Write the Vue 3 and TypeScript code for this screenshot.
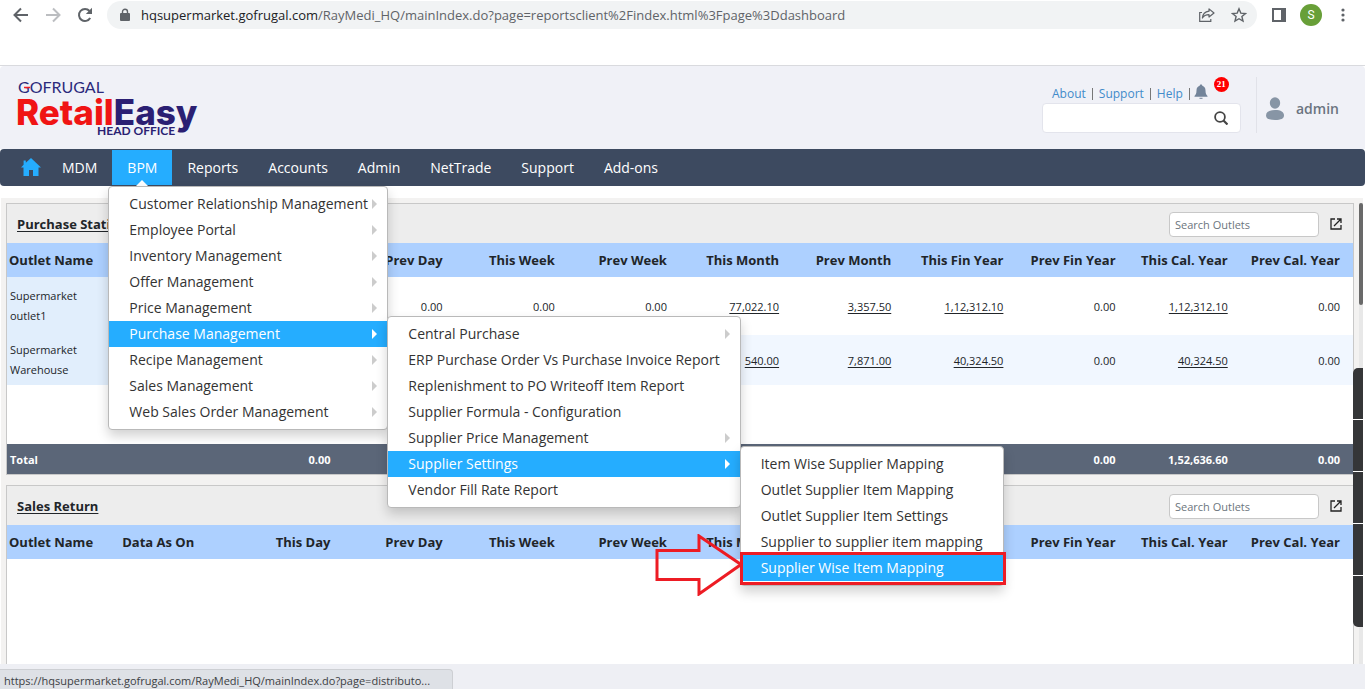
<script setup lang="ts">
interface MenuItem {
  label: string
  more?: boolean
  children?: MenuItem[]
}

interface OutletRow {
  name: string
  values: string[]
}

const supplierSettings: MenuItem[] = [
  { label: 'Item Wise Supplier Mapping' },
  { label: 'Outlet Supplier Item Mapping' },
  { label: 'Outlet Supplier Item Settings' },
  { label: 'Supplier to supplier item mapping' },
  { label: 'Supplier Wise Item Mapping' },
]

const purchaseMenu: MenuItem[] = [
  { label: 'Central Purchase', more: true },
  { label: 'ERP Purchase Order Vs Purchase Invoice Report' },
  { label: 'Replenishment to PO Writeoff Item Report' },
  { label: 'Supplier Formula - Configuration' },
  { label: 'Supplier Price Management', more: true },
  { label: 'Supplier Settings', more: true, children: supplierSettings },
  { label: 'Vendor Fill Rate Report' },
]

const bpmMenu: MenuItem[] = [
  { label: 'Customer Relationship Management', more: true },
  { label: 'Employee Portal', more: true },
  { label: 'Inventory Management', more: true },
  { label: 'Offer Management', more: true },
  { label: 'Price Management', more: true },
  { label: 'Purchase Management', more: true, children: purchaseMenu },
  { label: 'Recipe Management', more: true },
  { label: 'Sales Management', more: true },
  { label: 'Web Sales Order Management', more: true },
]

const navItems = ['MDM', 'BPM', 'Reports', 'Accounts', 'Admin', 'NetTrade', 'Support', 'Add-ons']

const columns = [
  'Outlet Name', 'Data As On', 'This Day', 'Prev Day', 'This Week', 'Prev Week',
  'This Month', 'Prev Month', 'This Fin Year', 'Prev Fin Year', 'This Cal. Year', 'Prev Cal. Year',
]

const outlets: OutletRow[] = [
  { name: 'Supermarket outlet1', values: ['', '0.00', '0.00', '0.00', '0.00', '77,022.10', '3,357.50', '1,12,312.10', '0.00', '1,12,312.10', '0.00'] },
  { name: 'Supermarket Warehouse', values: ['', '', '', '', '', '540.00', '7,871.00', '40,324.50', '0.00', '40,324.50', '0.00'] },
]

const totals = ['', '0.00', '', '', '', '', '', '1,52,636.60', '0.00', '1,52,636.60', '0.00']

const cards = [
  { id: 'purchase', title: 'Purchase Statistics', rows: outlets, totals },
  { id: 'return', title: 'Sales Return', rows: [] as OutletRow[], totals: [] as string[] },
]
</script>

<template>
  <div class="page">
    <div class="browser">
      <button class="tool back" aria-label="Back">
        <svg width="16" height="16" viewBox="0 0 16 16"><path d="M15 8H2M8 1.5 1.5 8 8 14.5" fill="none" stroke="#5f6368" stroke-width="2" /></svg>
      </button>
      <button class="tool forward" aria-label="Forward">
        <svg width="16" height="16" viewBox="0 0 16 16"><path d="M1 8h13M8 1.5 14.5 8 8 14.5" fill="none" stroke="#bcbec1" stroke-width="2" /></svg>
      </button>
      <button class="tool reload" aria-label="Reload">
        <svg width="16" height="16" viewBox="0 0 16 16"><path d="M13.2 11A6 6 0 1 1 12.5 4" fill="none" stroke="#5f6368" stroke-width="2" /><path d="M15 .8V7H8.8z" fill="#5f6368" /></svg>
      </button>
      <div class="address">
        <svg width="10" height="14" viewBox="0 0 10 14"><rect x="1" y="5" width="8" height="8" rx="1" fill="#5f6368" /><rect x="0" y="5" width="10" height="8" rx="1" fill="#5f6368" /><path d="M2.5 6V3.7a2.5 2.5 0 0 1 5 0V6" fill="none" stroke="#5f6368" stroke-width="1.4" /></svg>
        <span class="url"><span class="host">hqsupermarket.gofrugal.com</span>/RayMedi_HQ/mainIndex.do?page=reportsclient%2Findex.html%3Fpage%3Ddashboard</span>
        <button class="tool share" aria-label="Share">
          <svg width="16" height="14" viewBox="0 0 16 14"><path d="M3 4.5H.7v8.8h11.1V11" fill="none" stroke="#5f6368" stroke-width="1.2" /><path d="M10 .9 15 5l-5 4V6.700C7 6.700 4.800 7.600 3.400 10 3.700 6.500 6 3.700 10 3.200z" fill="none" stroke="#5f6368" stroke-width="1.200" stroke-linejoin="round" /></svg>
        </button>
        <button class="tool" aria-label="Bookmark">
          <svg width="16" height="16" viewBox="0 0 16 16"><path d="m8 1.800 1.800 4.300 4.700.4-3.600 3 1.100 4.600L8 11.700l-4 2.400 1.100-4.600-3.600-3 4.700-.4z" fill="none" stroke="#5f6368" stroke-width="1.400" /></svg>
        </button>
      </div>
      <button class="tool panel" aria-label="Side panel">
        <svg width="14" height="14" viewBox="0 0 14 14"><path d="M0 0h14v14H0zM2 2v10h7V2z" fill="#5f6368" fill-rule="evenodd" /></svg>
      </button>
      <button class="profile">S</button>
      <button class="tool" aria-label="More">
        <svg width="4" height="14" viewBox="0 0 4 14"><g fill="#5f6368"><circle cx="2" cy="2" r="1.600" /><circle cx="2" cy="7" r="1.600" /><circle cx="2" cy="12" r="1.600" /></g></svg>
      </button>
    </div>

    <header class="header">
      <svg class="logo" width="184" height="64" viewBox="0 0 184 64">
        <text x="0" y="16" class="logo-top">GOFRUGAL</text>
        <path d="M6 10.500h6" stroke="#ee1c25" stroke-width="1.500" />
        <text x="-2" y="48" class="logo-main"><tspan fill="#f01414">Retail</tspan><tspan fill="#2b1f73">Easy</tspan></text>
        <text x="79" y="58" class="logo-sub">HEAD OFFICE</text>
      </svg>
      <div class="tools">
        <div class="links">
          <a href="#">About</a>
          <a href="#">Support</a>
          <a href="#">Help</a>
          <button class="bell" aria-label="Notifications">
            <svg width="14" height="16" viewBox="0 0 14 16"><path d="M7 .5c.8 0 1.300.5 1.300 1.200C10.500 2.500 11.500 4 11.500 6.500c0 3 .8 4.300 2 5.500v.8H.5V12c1.200-1.200 2-2.500 2-5.500C2.500 4 3.500 2.500 5.700 1.700 5.700 1 6.200.5 7 .5z" fill="#73849a" /><path d="M5.500 14.300h3" stroke="#73849a" stroke-width="1" /></svg>
            <span class="badge">21</span>
          </button>
        </div>
        <form class="search" @submit.prevent>
          <input type="text" aria-label="Search" />
          <button aria-label="Go">
            <svg width="14" height="14" viewBox="0 0 14 14"><circle cx="6" cy="6" r="4.900" fill="none" stroke="#444" stroke-width="1.800" /><path d="m9.500 9.500 4 4" stroke="#444" stroke-width="2.200" /></svg>
          </button>
        </form>
      </div>
      <a class="user" href="#">
        <svg width="18" height="23" viewBox="0 0 18 23"><ellipse cx="9" cy="6" rx="5.200" ry="5.700" fill="#8795a5" /><path d="M0 18.500C0 15 3 13 9 13s9 2 9 5.500C18 21.500 15 23 9 23s-9-1.500-9-4.500z" fill="#8795a5" /></svg>
        admin
      </a>
    </header>

    <nav class="nav">
      <ul class="nav-list">
        <li>
          <a class="home" href="#" aria-label="Home">
            <svg width="20" height="18" viewBox="0 0 20 18"><path d="M10 0 4.800 4.700V2.500H2.600v4.200L0 9.400h2.500V18H8v-6h4v6h5.500V9.400H20z" fill="#25adff" /></svg>
          </a>
        </li>
        <li v-for="item in navItems" :key="item" class="nav-item" :class="{ open: item === 'BPM' }">
          <a href="#">{{ item }}</a>
          <ul v-if="item === 'BPM'" class="menu menu-root">
            <li v-for="first in bpmMenu" :key="first.label" :class="{ active: first.children }">
              <a href="#" :class="{ more: first.more }">{{ first.label }}</a>
              <ul v-if="first.children" class="menu menu-sub">
                <li v-for="second in first.children" :key="second.label" :class="{ active: second.children }">
                  <a href="#" :class="{ more: second.more }">{{ second.label }}</a>
                  <ul v-if="second.children" class="menu menu-sub">
                    <li v-for="(third, i) in second.children" :key="third.label" :class="{ active: i === 4 }">
                      <a href="#">{{ third.label }}</a>
                      <div v-if="i === 4" class="marker">
                        <svg class="pointer" width="88" height="62" viewBox="0 0 88 62"><path d="M2 16.500h42V2l42 28.500L44 60V45.500H2z" fill="none" stroke="#ed1c24" stroke-width="3" /></svg>
                      </div>
                    </li>
                  </ul>
                </li>
              </ul>
            </li>
          </ul>
        </li>
      </ul>
    </nav>

    <main class="workspace">
      <div class="cards">
        <section v-for="card in cards" :key="card.id" class="card">
          <div class="card-head">
            <h2>{{ card.title }}</h2>
            <input type="text" placeholder="Search Outlets" aria-label="Search Outlets" />
            <button aria-label="Open in new window">
              <svg width="12" height="12" viewBox="0 0 12 12"><path d="M5 1H1v10h10V7" fill="none" stroke="#222" stroke-width="1.300" /><path d="M7 1h4v4M11 1 4 8" fill="none" stroke="#222" stroke-width="1.300" /></svg>
            </button>
          </div>
          <div class="table-area">
            <table>
              <thead>
                <tr><th v-for="column in columns" :key="column" scope="col">{{ column }}</th></tr>
              </thead>
              <tbody>
                <tr v-for="row in card.rows" :key="row.name">
                  <th scope="row">{{ row.name }}</th>
                  <td v-for="(value, i) in row.values" :key="i">
                    <a v-if="value && value !== '0.00'" href="#">{{ value }}</a>
                    <template v-else>{{ value }}</template>
                  </td>
                </tr>
                <tr v-if="card.totals.length" class="spacer"><td :colspan="columns.length"></td></tr>
              </tbody>
              <tfoot v-if="card.totals.length">
                <tr>
                  <th scope="row">Total</th>
                  <td v-for="(value, i) in card.totals" :key="i">{{ value }}</td>
                </tr>
              </tfoot>
            </table>
          </div>
        </section>
      </div>
      <div class="track"><div class="thumb"></div></div>
      <div class="dock"><span v-for="n in 5" :key="n"></span></div>
    </main>

    <footer class="footer">
      <div class="status">https://hqsupermarket.gofrugal.com/RayMedi_HQ/mainIndex.do?page=distributo...</div>
    </footer>
  </div>
</template>

<style>
body {
  margin: 0;
}
</style>

<style scoped>
.page {
  display: flex;
  flex-direction: column;
  height: 100vh;
  overflow: hidden;
  background: #fff;
  font-family: "Open Sans", "Noto Sans", sans-serif;
  font-size: 13px;
  color: #212529;
}

a {
  color: inherit;
  text-decoration: none;
}

button {
  display: flex;
  padding: 0;
  border: 0;
  background: none;
  font-family: inherit;
}

ul {
  margin: 0;
  padding: 0;
  list-style: none;
}

input {
  box-sizing: border-box;
  min-width: 0;
  font-family: inherit;
}

/* Browser toolbar */
.browser {
  display: flex;
  align-items: center;
  flex: none;
  box-sizing: border-box;
  height: 66px;
  padding: 0 20px 35px 13px;
  border-bottom: 1px solid #d9dade;
}

.tool {
  flex: none;
}

.back,
.forward {
  margin-right: 16px;
}

.reload {
  margin-right: 14px;
}

.address {
  display: flex;
  align-items: center;
  flex: 1;
  min-width: 0;
  height: 28px;
  padding: 0 10px 0 13px;
  border-radius: 14px;
  background: #f1f3f4;
}

.url {
  flex: 1;
  margin-left: 11px;
  overflow: hidden;
  white-space: nowrap;
  color: #5f6368;
}

.host {
  color: #202124;
}

.share {
  margin-right: 16px;
}

.panel {
  margin: 0 14px 0 15px;
}

.profile {
  align-items: center;
  justify-content: center;
  width: 22px;
  height: 22px;
  margin-right: 19px;
  border-radius: 50%;
  background: #689f38;
  color: #fff;
  font-family: Roboto, sans-serif;
  font-size: 12px;
}

/* Application header */
.header {
  display: flex;
  align-items: flex-start;
  flex: none;
  box-sizing: border-box;
  height: 83px;
  padding: 11px 26px 0 18px;
  border-radius: 4px 4px 0 0;
  background: #f0f1f7;
}

.logo {
  flex: none;
  overflow: visible;
}

.logo-top {
  font: 400 16px Lato, sans-serif;
  fill: #2b2a7c;
}

.logo-main {
  font: 800 35px Inter, sans-serif;
}

.logo-sub {
  font: 700 12px Lato, sans-serif;
  fill: #2b1f73;
}

.tools {
  width: 199px;
  margin-left: auto;
}

.links {
  display: flex;
  align-items: center;
  height: 26px;
  padding: 7px 0 0 10px;
  box-sizing: border-box;
  font-size: 12px;
  color: #428bca;
}

.links a {
  margin-right: 6px;
  padding-right: 6px;
  border-right: 1px solid #777;
  line-height: 12px;
}

.links a:nth-child(3) {
  margin-right: 4px;
}

.bell {
  position: relative;
  padding-bottom: 4px;
}

.badge {
  position: absolute;
  left: 20px;
  top: -7px;
  width: 15px;
  height: 15px;
  border-radius: 50%;
  background: #f00;
  color: #fff;
  font: 700 9px/15px "Liberation Serif", serif;
  text-align: center;
}

.search {
  display: flex;
  align-items: center;
  box-sizing: border-box;
  height: 30px;
  padding-right: 12px;
  border: 1px solid #e3e4ec;
  border-radius: 4px;
  background: #fff;
}

.search input {
  flex: 1;
  height: 26px;
  border: 0;
  background: none;
}

.user {
  display: flex;
  align-items: center;
  gap: 12px;
  height: 56px;
  margin-left: 15px;
  padding: 6px 0 0 9px;
  box-sizing: border-box;
  border-left: 1px solid #e1e2e9;
  color: #6b7480;
  font-size: 14px;
  font-weight: 600;
}

/* Navigation */
.nav {
  flex: none;
  height: 37px;
  border-radius: 4px;
  background: #3d4a60;
  color: #fff;
  font-size: 14px;
}

.nav-list {
  display: flex;
  height: 37px;
  align-items: center;
}

.home {
  display: flex;
  padding: 0 6px 2px 21px;
}

.nav-item {
  position: relative;
}

.nav-item > a {
  display: block;
  padding: 0 15px;
  line-height: 35px;
}

.open {
  background: #25adff;
}

.open > a::after {
  content: "";
  position: absolute;
  left: 50%;
  bottom: -1px;
  margin-left: -6px;
  border: 6px solid transparent;
  border-top: 0;
  border-bottom-color: #fff;
}

.menu {
  position: absolute;
  z-index: 10;
  box-sizing: border-box;
  padding: 4px 0;
  border: 1px solid #b9b9b9;
  border-radius: 4px;
  background: #fff;
  box-shadow: 0 6px 12px rgba(0, 0, 0, 0.18);
  color: #333;
  white-space: nowrap;
}

.menu-root {
  top: 36px;
  left: -4px;
  width: 280px;
}

.menu-sub {
  top: -5px;
  left: 100%;
}

.menu li {
  position: relative;
}

.menu a {
  display: block;
  padding: 0 20px;
  line-height: 26px;
}

.menu .active > a {
  background: #25adff;
  color: #fff;
}

.more::after {
  content: "";
  position: absolute;
  right: 10px;
  top: 8px;
  border: 5px solid transparent;
  border-right: 0;
  border-left-color: #ccc;
}

.active > .more::after {
  border-left-color: #fff;
}

.marker {
  position: absolute;
  inset: -3px -3px -4px -1px;
  border: 3px solid #ed1c24;
}

.pointer {
  position: absolute;
  right: 100%;
  top: -21px;
}

/* Dashboard */
.workspace {
  position: relative;
  display: flex;
  flex: 1;
  min-height: 0;
  margin: 12px 2px 0 1px;
  background: #f3f2f1;
}

.cards {
  flex: 1;
  min-width: 0;
  padding: 5px 9px 0 5px;
  overflow: hidden;
}

.card {
  margin-bottom: 10px;
  border: 1px solid #c8c8c8;
  background: #fff;
}

.card-head {
  display: flex;
  align-items: center;
  height: 39px;
  padding: 0 11px 0 10px;
  background: #ededed;
}

.card-head h2 {
  flex: 1;
  margin: 0;
  font-size: 13px;
  text-decoration: underline;
  text-underline-offset: 2px;
}

.card-head input {
  width: 150px;
  height: 25px;
  margin: 2px 11px 0 0;
  padding: 0 5px;
  border: 1px solid #c8c8c8;
  border-radius: 4px;
  background: #fff;
  font-size: 11px;
}

.card-head input::placeholder {
  color: #6c757d;
}

.table-area {
  min-height: 200px;
}

table {
  width: 100%;
  table-layout: fixed;
  border-collapse: collapse;
}

th,
td {
  padding: 0 13px 0 3px;
  text-align: right;
  white-space: nowrap;
}

td {
  font-size: 11px;
}

thead th {
  height: 34px;
  background: #add0ff;
}

thead th:nth-child(-n + 2),
tbody th,
tfoot th {
  padding: 0 3px;
  text-align: left;
}

thead th:first-child {
  padding-left: 2px;
}

tbody th {
  background: #e1eefc;
  font-size: 11px;
  font-weight: 400;
  line-height: 20px;
  white-space: normal;
  padding-right: 30px;
}

tbody tr {
  height: 58px;
}

tbody tr:nth-child(2) {
  height: 50px;
  background: #f1f7ff;
}

tbody .spacer {
  height: 59px;
}

td a {
  text-decoration: underline;
  text-underline-offset: 2px;
}

tfoot tr {
  height: 30px;
  background: #5b6678;
  color: #fff;
}

tfoot th,
tfoot td {
  font-size: 11px;
  font-weight: 700;
}

.track {
  position: absolute;
  top: 5px;
  right: 0;
  bottom: 0;
  width: 4px;
  background: #e8e8e8;
}

.thumb {
  height: 102px;
  border-radius: 2px;
  background: #696969;
}

.dock {
  position: absolute;
  top: 170px;
  right: 0;
  display: grid;
  gap: 1px;
  width: 10px;
  overflow: hidden;
  border-radius: 5px 0 0 5px;
  background: #fff;
}

.dock span {
  height: 51px;
  background: #353638;
}

.footer {
  display: flex;
  align-items: flex-end;
  flex: none;
  height: 25px;
  background: #eeeff4;
}

.status {
  box-sizing: border-box;
  min-width: 453px;
  height: 20px;
  padding: 0 6px 0 4px;
  border: 1px solid #cdcfd3;
  border-width: 1px 1px 0 0;
  border-radius: 0 4px 0 0;
  background: #dee1e6;
  color: #3c4043;
  font-size: 11px;
  line-height: 22px;
  white-space: nowrap;
}
</style>
